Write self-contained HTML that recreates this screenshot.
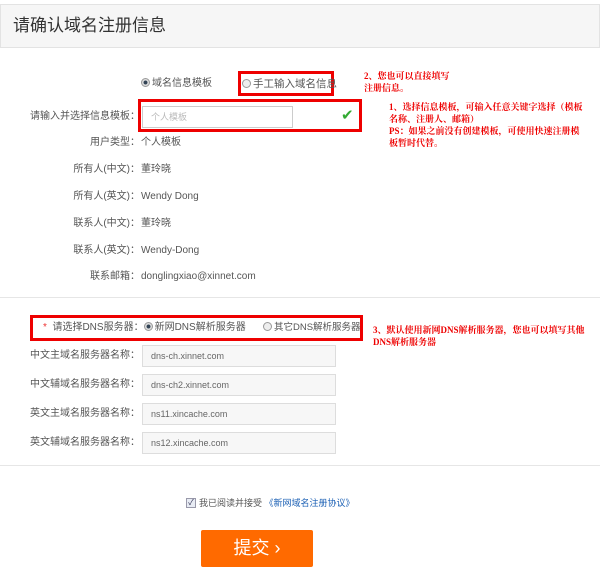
<!DOCTYPE html><html><head><meta charset="utf-8"><style>
body{margin:0;width:600px;height:571px;background:#fff;position:relative;overflow:hidden;font-family:"Liberation Sans","Noto Sans CJK SC",sans-serif;color:#555;font-size:10px}
.a{position:absolute;white-space:nowrap;line-height:12px}
.hd{position:absolute;left:0;top:4px;width:598px;height:42px;background:#f6f6f6;border:1px solid #e3e3e3}
.rb{position:absolute;border:3px solid #e00;box-sizing:border-box}
.lab{position:absolute;right:460px;white-space:nowrap;text-align:right;line-height:12px}
.inp{position:absolute;left:142px;width:194px;height:22px;box-sizing:border-box;border:1px solid #ddd;background:#f7f7f7;padding-left:8px;line-height:20px;color:#666;font-size:9px}
.red{position:absolute;color:#e00;font-weight:bold;font-size:9px;line-height:12px;font-family:"Liberation Serif","Noto Serif CJK SC",serif}
.rad{display:inline-block;width:7px;height:7px;border-radius:50%;border:1px solid #999;background:#eee;vertical-align:-1px;margin-right:2px}
.on{background:radial-gradient(#345 35%,#ddd 45%)}
.hr{position:absolute;left:0;width:600px;height:1px;background:#e6e6e6}
</style></head><body>
<div class="hd"></div>
<div class="a" style="left:13px;top:16px;font-size:17px;line-height:20px;color:#333">请确认域名注册信息</div>
<div class="a" style="left:141px;top:78px"><span class="rad on"></span>域名信息模板</div>
<div class="rb" style="left:238px;top:71px;width:96px;height:25px"></div>
<div class="a" style="left:242px;top:78px;font-size:10.5px"><span class="rad"></span>手工输入域名信息</div>
<div class="red" style="left:364px;top:70px">2、您也可以直接填写<br>注册信息。</div>
<div class="rb" style="left:138px;top:99px;width:224px;height:33px"></div>
<div class="inp" style="top:106px;width:151px;height:22px;background:#fff;color:#bbb;border-color:#ccc">个人模板</div>
<div class="a" style="left:341px;top:110px;color:#3a3;font-size:15px">✔</div>
<div class="red" style="left:389px;top:101px">1、选择信息模板，可输入任意关键字选择（模板<br>名称、注册人、邮箱）<br>PS：如果之前没有创建模板，可使用快速注册模<br>板暂时代替。</div>
<div class="lab" style="top:111px">请输入并选择信息模板：</div>
<div class="lab" style="top:137px">用户类型：</div><div class="a" style="left:141px;top:137px">个人模板</div>
<div class="lab" style="top:164px">所有人(中文)：</div><div class="a" style="left:141px;top:164px">董玲晓</div>
<div class="lab" style="top:191px">所有人(英文)：</div><div class="a" style="left:141px;top:191px">Wendy Dong</div>
<div class="lab" style="top:218px">联系人(中文)：</div><div class="a" style="left:141px;top:218px">董玲晓</div>
<div class="lab" style="top:245px">联系人(英文)：</div><div class="a" style="left:141px;top:245px">Wendy-Dong</div>
<div class="lab" style="top:271px">联系邮箱：</div><div class="a" style="left:141px;top:271px">donglingxiao@xinnet.com</div>
<div class="hr" style="top:297px"></div>
<div class="rb" style="left:30px;top:315px;width:333px;height:26px"></div>
<div class="a" style="left:43px;top:322px;font-size:10px"><span style="color:#e33">*</span>&nbsp; 请选择DNS服务器：<span class="rad on"></span>新网DNS解析服务器</div>
<div class="a" style="left:263px;top:322px;font-size:9.5px"><span class="rad"></span>其它DNS解析服务器</div>
<div class="red" style="left:373px;top:324px">3、默认使用新网DNS解析服务器，您也可以填写其他<br>DNS解析服务器</div>
<div class="lab" style="top:350px">中文主域名服务器名称：</div><div class="inp" style="top:345px">dns-ch.xinnet.com</div>
<div class="lab" style="top:379px">中文辅域名服务器名称：</div><div class="inp" style="top:374px">dns-ch2.xinnet.com</div>
<div class="lab" style="top:408px">英文主域名服务器名称：</div><div class="inp" style="top:403px">ns11.xincache.com</div>
<div class="lab" style="top:437px">英文辅域名服务器名称：</div><div class="inp" style="top:432px">ns12.xincache.com</div>
<div class="hr" style="top:465px"></div>
<div class="a" style="left:186px;top:498px;width:8px;height:8px;border:1px solid #99a;background:#e8ecf4;font-size:8px;line-height:8px;text-align:center;color:#335">✓</div>
<div class="a" style="left:199px;top:497px;font-size:9px">我已阅读并接受 <span style="color:#1a5fb4">《新网域名注册协议》</span></div>
<div class="a" style="left:201px;top:530px;width:112px;height:37px;background:#ff6a00;border-radius:2px;color:#fff;font-size:18px;line-height:37px;text-align:center">提交 ›</div>
</body></html>
